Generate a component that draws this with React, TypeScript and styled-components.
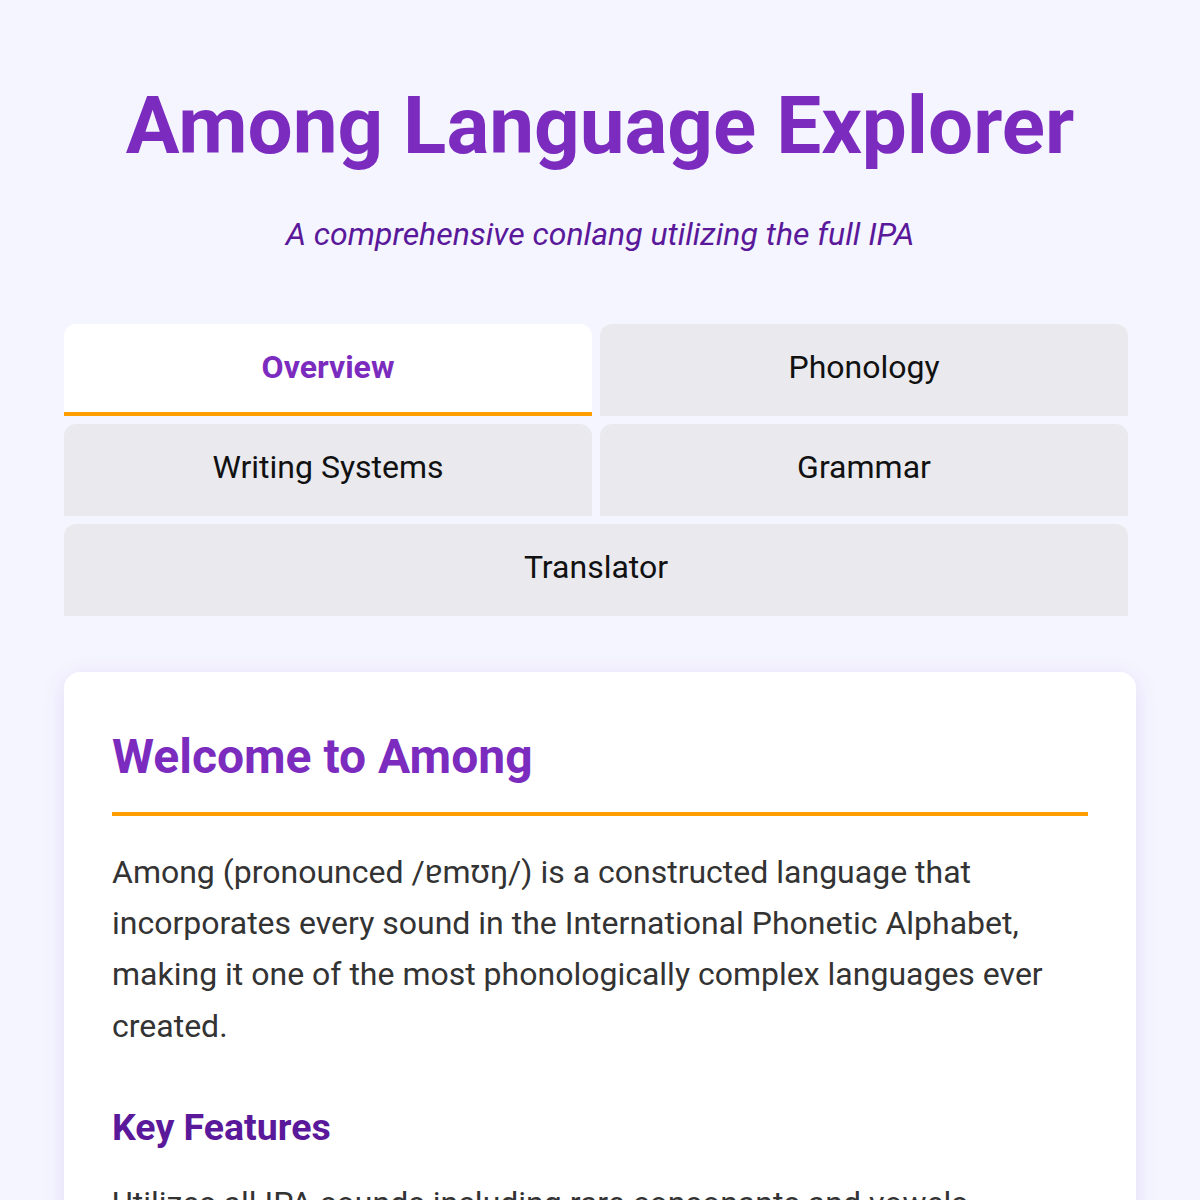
import React, { useState } from "react";
import styled, { createGlobalStyle } from "styled-components";

const GlobalStyle = createGlobalStyle`
  html, body {
    margin: 0;
    padding: 0;
    background: #f5f5ff;
  }
  body {
    font-family: Roboto, "Noto Sans", "DejaVu Sans", sans-serif;
    color: #333;
  }
  * { box-sizing: border-box; }
`;

const Page = styled.div`
  padding: 64px 64px 0 64px;
  height: 1200px;
  overflow: hidden;
`;

const Header = styled.header`
  display: flex;
  flex-direction: column;
  align-items: center;
  text-align: center;
`;

const Title = styled.h1`
  margin: 14px 0 0;
  font-size: 80px;
  font-weight: 700;
  line-height: 1.2;
  color: #7b2cbf;
`;

const Subtitle = styled.p`
  margin: 41px 0 0;
  font-size: 32px;
  font-style: italic;
  line-height: 1.2;
  color: #5a189a;
`;

const TabGrid = styled.nav`
  display: grid;
  grid-template-columns: 1fr 1fr;
  gap: 8px;
  width: calc(100% - 8px);
  margin-top: 71px;
`;

const Tab = styled.button<{ $active?: boolean; $wide?: boolean }>`
  grid-column: ${(p) => (p.$wide ? "1 / span 2" : "auto")};
  height: 92px;
  border: none;
  border-radius: 12px 12px 0 0;
  border-bottom: 4px solid ${(p) => (p.$active ? "#ff9e00" : "transparent")};
  background: ${(p) => (p.$active ? "#ffffff" : "#e9e9ee")};
  color: ${(p) => (p.$active ? "#7b2cbf" : "#111")};
  font-family: inherit;
  font-size: 32px;
  font-weight: ${(p) => (p.$active ? 700 : 400)};
  padding: 0 0 2px;
  cursor: pointer;
`;

const Card = styled.section`
  margin-top: 56px;
  background: #ffffff;
  border-radius: 16px;
  padding: 48px;
  box-shadow: 0 4px 24px rgba(90, 24, 154, 0.1);
`;

const SectionTitle = styled.h2`
  margin: 0;
  padding: 8px 0 26px;
  font-size: 48px;
  font-weight: 700;
  line-height: 1.2;
  color: #7b2cbf;
  border-bottom: 4px solid #ff9e00;
`;

const Paragraph = styled.p<{ $gap?: number }>`
  margin: ${(p) => p.$gap ?? 31}px 0 0;
  font-size: 32px;
  line-height: 1.6;
  color: #333;
`;

const SubTitle = styled.h3`
  margin: 53px 0 0;
  font-size: 37.5px;
  font-weight: 700;
  line-height: 1.2;
  color: #5a189a;
`;

const tabs = ["Overview", "Phonology", "Writing Systems", "Grammar", "Translator"];

export default function App() {
  const [active, setActive] = useState("Overview");
  return (
    <>
      <GlobalStyle />
      <Page>
        <Header>
          <Title>Among Language Explorer</Title>
          <Subtitle>A comprehensive conlang utilizing the full IPA</Subtitle>
        </Header>
        <TabGrid>
          {tabs.map((t) => (
            <Tab
              key={t}
              $active={active === t}
              $wide={t === "Translator"}
              onClick={() => setActive(t)}
            >
              {t}
            </Tab>
          ))}
        </TabGrid>
        <Card>
          <SectionTitle>Welcome to Among</SectionTitle>
          <Paragraph>
            Among (pronounced /ɐmʊŋ/) is a constructed language that incorporates every
            sound in the International Phonetic Alphabet, making it one of the most
            phonologically complex languages ever created.
          </Paragraph>
          <SubTitle>Key Features</SubTitle>
          <Paragraph $gap={28}>
            Utilizes all IPA sounds including rare consonants and vowels
          </Paragraph>
        </Card>
      </Page>
    </>
  );
}
